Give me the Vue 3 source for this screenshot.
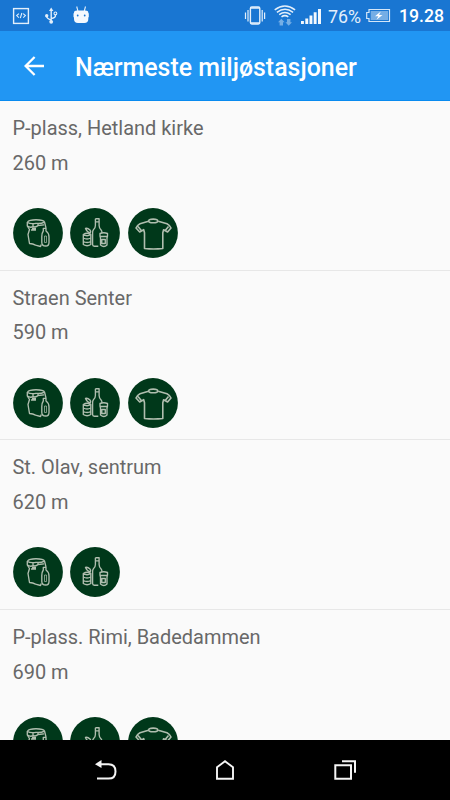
<script setup>
const stations = [
  { name: 'P-plass, Hetland kirke', distance: '260 m', types: ['paper', 'glass', 'textile'] },
  { name: 'Straen Senter', distance: '590 m', types: ['paper', 'glass', 'textile'] },
  { name: 'St. Olav, sentrum', distance: '620 m', types: ['paper', 'glass'] },
  { name: 'P-plass. Rimi, Badedammen', distance: '690 m', types: ['paper', 'glass', 'textile'] },
]
</script>

<template>
  <div class="screen">
    <header class="status">
      <svg width="90" height="31" viewBox="0 0 90 31" fill="none" stroke="#e3effb">
        <rect x="13.6" y="8.600" width="14.800" height="14.800" stroke-width="1.400" />
        <path d="M18.900 13.600l-2.200 2 2.200 2M23.200 13.600l2.200 2-2.200 2M21.900 13l-1.600 5.200" stroke-width="1.100" />
        <path d="M51.2 10v12M46.700 15.500v1q0 1.800 4.500 3.700M55.400 14.500v1.500q0 1.700-4.200 2.500" stroke-width="1.400" />
        <path d="M51.200 7.500l2.200 3.500h-4.400z" fill="#e3effb" stroke="none" />
        <circle cx="46.700" cy="15.700" r="1.700" fill="#e3effb" stroke="none" />
        <circle cx="55.400" cy="13.400" r="1.400" stroke-width="1.100" />
        <circle cx="51.200" cy="21.800" r="1.900" fill="#e3effb" stroke="none" />
        <path d="M76.700 6.500l1.200 4.500M85.500 6.500l-1.200 4.500" stroke-width="1.100" />
        <path d="M74 12.500q0-2 3-2h8.300q3 0 3 2v.8h.5v4h-.5v1.700q0 4-4 4h-6.300q-4 0-4-4v-1.700h-.5v-4h.5z" fill="#f5f9fe" stroke="none" />
        <circle cx="77.700" cy="15.500" r=".9" fill="#1976d2" stroke="none" />
        <circle cx="84.700" cy="15.500" r=".9" fill="#1976d2" stroke="none" />
      </svg>
      <div class="right">
        <svg width="82" height="31" viewBox="0 0 82 31" fill="none" stroke="#e3effb">
          <rect x="6.400" y="7" width="9.400" height="17" rx="1.400" stroke-width="1.400" />
          <path d="M6.400 8h9.400M6.400 23h9.400" stroke-width="1.700" />
          <path d="M4 10v11.500M18.200 10v11.500M1.500 12.500v6.500M20.600 12.500v6.500" stroke-width="1.200" />
          <path d="M30.700 9.800q10.200-7.600 20.400 0M32.900 12.300q8.100-6 16.200 0M35.200 14.700q5.700-4.200 11.400 0" stroke-width="1.500" />
          <path d="M37.500 16.800q3.400-2.300 6.800 0" stroke-width="1.600" />
          <path d="M37.300 18.700l3.300 3.500h-1.600v3.300h-3.400v-3.300h-1.600zM44.700 25.700l-3.300-3.500h1.600v-3.300h3.400v3.300h1.600z" fill="#75aee5" stroke="none" />
          <path d="M57 21h2.900v3h-2.900zM61.300 18.500h2.900v5.500h-2.900zM65.500 15.500h2.900v8.500h-2.900zM69.700 12.300h2.900v11.700h-2.900zM74 9h3v15h-3z" fill="#f3f8fd" stroke="none" />
        </svg>
        <span class="percent">76%</span>
        <svg class="battery" width="25" height="31" viewBox="0 0 25 31">
          <path d="M3 9.500h20.500v12H3v-3H.7v-6H3z" fill="none" stroke="#d4e6f8" stroke-width="1.200" />
          <path d="M4.700 11h17.300v9H4.700z" fill="#75aee5" />
          <path d="M14.800 11.500l-5.800 4.700h3.400l-1.900 3.500 6-4.700h-3.500z" fill="#fff" />
        </svg>
        <span class="time">19.28</span>
      </div>
    </header>
    <div class="toolbar">
      <svg width="20" height="20" viewBox="0 0 20 20" fill="none" stroke="#fff" stroke-width="2.300">
        <path d="M20 10H1.800M10.600 1L1.600 10l9 9" />
      </svg>
      <h1>Nærmeste miljøstasjoner</h1>
    </div>
    <main class="list">
      <article v-for="s in stations" :key="s.name" class="row">
        <div class="name">{{ s.name }}</div>
        <div class="distance">{{ s.distance }}</div>
        <div class="types">
          <svg v-for="t in s.types" :key="t" class="type" viewBox="0 0 50 50">
            <circle cx="25" cy="25" r="24.900" fill="#00381a" />
            <g v-if="t === 'paper'" class="lines">
              <path d="M14.500 14q1.500-2.300 8.500-2.300 7.500 0 8.500 2.300l1.500 6M14.300 14v4l2.200 3.500-1.500 5 1.500 9q3.500.2 6 1.700l5 1.300.8-2" />
              <path d="M14.500 14.500q3 1.800 8.500.8 5 .5 8-1M14.500 18q2.500 2 5.500.7v-3M20 18.500q3 1 5-1v-2M18 22h5M25 17.500l6-.7M19 20.500h4" />
              <path d="M30.300 23v-2.700h2.700v2.700q3 2 3 6v5.500q0 3.500-3.200 3.500-4 0-4-3.500v-6q0-3.500 1.500-5.500z" />
              <path d="M31.500 28h2v6.500h-2z" stroke-width=".7" />
            </g>
            <g v-else-if="t === 'glass'" class="lines">
              <path d="M25.400 10.700h3.700v6.800q0 2.500 2 4.500 1 1 .8 3M25.400 10.700v6.800q0 2.500-1.800 4-1 1-1 3v12q0 1.700 1.700 1.700h4M25.500 13.800h3.500" />
              <path d="M13.300 26.500v10q3.800 2.500 7.500 0v-10q-3.700-2.500-7.500 0zq3.700 2.500 7.500 0M13.300 30q3.700 2 7.500 0M13.300 33.500q3.700 2 7.500 0" />
              <path d="M20.300 25q-3.300-.7-4.800-4.500 2-.8 4.500 1.500 1.200 1.200.3 3z" />
              <path d="M30 25.500q3.700-1.500 7.500 0v2.500l-.5 2v7q-3 3-6.500 0v-7l-.5-2zM30 28.500h7.500M31.800 31.500h3.500v4h-3.500z" />
            </g>
            <g v-else class="lines shirt">
              <path d="M20.500 13.200l-8.500 2.500q-2.700 1.300-4 4.300l3.700 4 4-2.300.8 3v15.800q9 1 18.300 0V24.700l.8-3 4 2.300 3.400-4q-1.300-3-4-4.300l-8.800-2.500M10 18.500l3.300 4M40.500 18.500l-3.300 4" />
              <ellipse cx="25.200" cy="12.900" rx="4.500" ry="1.800" />
            </g>
          </svg>
        </div>
      </article>
    </main>
    <nav class="navbar">
      <svg width="450" height="60" viewBox="0 0 450 60" fill="none" stroke="#f5f5f5" stroke-width="2">
        <path d="M99 24.200h9.500q7 0 7 7.200t-7 7.200H97" />
        <path d="M95 24.200l6.500-4.200v8z" fill="#f5f5f5" stroke="none" />
        <path d="M217 38.700V27.300l8-6 8 6v11.400z" stroke-width="1.900" />
        <path d="M335.300 25.200h15.700v13.600h-15.700zM342 21.300h13v11.500" />
      </svg>
    </nav>
  </div>
</template>

<style>
body { margin: 0; overflow: hidden; }
</style>

<style scoped>
.screen {
  width: 450px;
  height: 800px;
  display: flex;
  flex-direction: column;
  overflow: hidden;
  background: #fafafa;
  font-family: Roboto, "Liberation Sans", sans-serif;
}
svg { display: block; flex: none; }
.status {
  height: 31px;
  flex: none;
  display: flex;
  justify-content: space-between;
  background: #1976d2;
  color: #fff;
}
.right { display: flex; width: 206px; line-height: 33px; }
.percent { font-size: 17.800px; width: 36px; color: #e3effb; margin-left: 2px; white-space: nowrap; }
.battery { margin-left: 2px; }
.time { margin-left: 8px; font-size: 17.700px; font-weight: 500; white-space: nowrap; }
.toolbar {
  height: 69px;
  flex: none;
  display: flex;
  align-items: center;
  padding-left: 24px;
  background: #2196f3;
  border-bottom: 1px solid #098bf0;
}
h1 {
  margin: 4px 0 0 31px;
  color: #fff;
  font-size: 24.930px;
  font-weight: 500;
  line-height: 32px;
  white-space: nowrap;
}
.list { flex: 1; min-height: 0; overflow: hidden; }
.row {
  height: 169.700px;
  box-sizing: border-box;
  padding: 10px 12.500px 0;
  border-bottom: 1px solid #e7e7e7;
  color: #686868;
  font-size: 19.970px;
}
.name, .distance { height: 34.500px; line-height: 35px; white-space: nowrap; }
.types { display: flex; gap: 7.500px; margin-top: 28px; }
.type { width: 50px; height: 50px; }
.lines { fill: none; stroke: #b0beaf; stroke-width: 1.350; stroke-linejoin: round; }
.shirt { stroke-width: 1.600; }
.navbar { height: 60px; flex: none; background: #000; }
</style>
